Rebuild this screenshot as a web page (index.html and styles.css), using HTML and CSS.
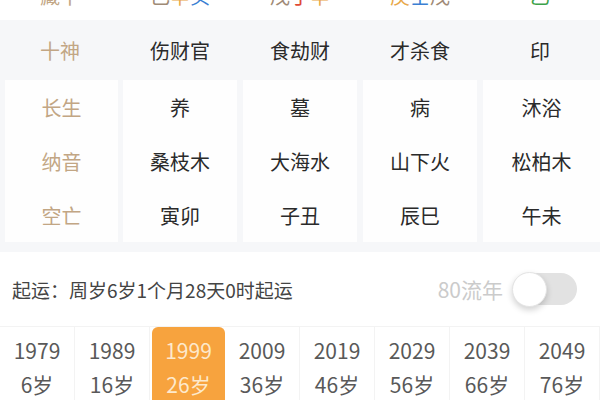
FILE: index.html
```html
<!DOCTYPE html>
<html lang="zh-CN">
<head>
<meta charset="utf-8">
<link rel="stylesheet" href="styles.css">
</head>
<body>
<div class="page">
  <div class="top-row">
    <div class="cell label">藏干</div>
    <div class="cell"><span class="earth">己</span><span class="metal">辛</span><span class="water">癸</span></div>
    <div class="cell"><span class="earth">戊</span><span class="fire">丁</span><span class="metal">辛</span></div>
    <div class="cell"><span class="metal">庚</span><span class="water">壬</span><span class="earth">戊</span></div>
    <div class="cell"><span class="wood">乙</span></div>
  </div>
  <div class="pillars">
    <div class="shishen">
      <div class="cell label">十神</div>
      <div class="cell">伤财官</div>
      <div class="cell">食劫财</div>
      <div class="cell">才杀食</div>
      <div class="cell">印</div>
    </div>
    <div class="cards">
      <div class="card">
        <div class="cell label">长生</div>
        <div class="cell label">纳音</div>
        <div class="cell label">空亡</div>
      </div>
      <div class="card">
        <div class="cell">养</div>
        <div class="cell">桑枝木</div>
        <div class="cell">寅卯</div>
      </div>
      <div class="card">
        <div class="cell">墓</div>
        <div class="cell">大海水</div>
        <div class="cell">子丑</div>
      </div>
      <div class="card">
        <div class="cell">病</div>
        <div class="cell">山下火</div>
        <div class="cell">辰巳</div>
      </div>
      <div class="card">
        <div class="cell">沐浴</div>
        <div class="cell">松柏木</div>
        <div class="cell">午未</div>
      </div>
    </div>
  </div>
  <div class="qiyun">
    <div class="qiyun-text">起运：周岁6岁1个月28天0时起运</div>
    <div class="liunian">
      <span class="liunian-label">80流年</span>
      <span class="switch"><span class="knob"></span></span>
    </div>
  </div>
  <div class="years">
    <div class="year"><div class="y">1979</div><div class="a">6岁</div></div>
    <div class="year"><div class="y">1989</div><div class="a">16岁</div></div>
    <div class="year active"><div class="y">1999</div><div class="a">26岁</div></div>
    <div class="year"><div class="y">2009</div><div class="a">36岁</div></div>
    <div class="year"><div class="y">2019</div><div class="a">46岁</div></div>
    <div class="year"><div class="y">2029</div><div class="a">56岁</div></div>
    <div class="year"><div class="y">2039</div><div class="a">66岁</div></div>
    <div class="year"><div class="y">2049</div><div class="a">76岁</div></div>
  </div>
</div>
</body>
</html>
```

FILE: styles.css
```css
* { box-sizing: border-box; }
html, body {
  margin: 0;
  padding: 0;
  background: #ffffff;
}
body {
  width: 600px;
  height: 400px;
  overflow: hidden;
  font-family: "Noto Sans CJK SC", "Noto Sans", sans-serif;
  color: #2a2a2a;
}
.page {
  display: flex;
  flex-direction: column;
}
.label { color: #c2a684; }

.top-row {
  height: 20px;
  overflow: hidden;
  display: grid;
  grid-template-columns: repeat(5, 1fr);
  background: #ffffff;
}
.top-row .cell {
  font-size: 20px;
  line-height: 20px;
  height: 20px;
  margin-top: -14px;
  text-align: center;
}
.earth { color: #a08a76; }
.metal { color: #e8a84a; }
.water { color: #3b7fd3; }
.fire { color: #e04a36; }
.wood { color: #3ca24a; }

.pillars {
  background: #f6f7f9;
  padding-bottom: 10px;
}
.shishen {
  display: grid;
  grid-template-columns: repeat(5, 1fr);
  height: 60px;
}
.cell {
  display: flex;
  align-items: center;
  justify-content: center;
  font-size: 20px;
}
.shishen .cell { height: 60px; }
.cards {
  display: grid;
  grid-template-columns: repeat(5, 1fr);
}
.card {
  background: #fefefe;
  margin: 0 3px;
  display: flex;
  flex-direction: column;
}
.card:first-child { margin-left: 5px; margin-right: 2px; }
.card:last-child { margin-right: 0; }
.card .cell { height: 54px; }

.qiyun {
  height: 74px;
  display: flex;
  align-items: center;
  justify-content: space-between;
  padding: 0 23px 0 12px;
}
.qiyun-text {
  font-size: 19px;
  color: #444444;
}
.liunian {
  display: flex;
  align-items: center;
  gap: 10px;
}
.liunian-label {
  font-size: 21px;
  color: #cbcbcb;
}
.switch {
  width: 64px;
  height: 32px;
  border-radius: 16px;
  background: #e2e2e2;
  display: flex;
  align-items: center;
}
.knob {
  width: 35px;
  height: 35px;
  border-radius: 50%;
  background: #ffffff;
  border: 1px solid #e4e4e4;
  box-shadow: 0 3px 6px rgba(0, 0, 0, 0.18);
  margin-left: -1px;
}

.years {
  display: grid;
  grid-template-columns: repeat(8, 75px);
  border-top: 1px solid #f3f3f3;
  height: 80px;
}
.year {
  padding-top: 6px;
  text-align: center;
  border-right: 1px solid #f3f3f3;
  color: #595959;
}
.year .y, .year .a {
  font-size: 21px;
  line-height: 34px;
}
.year.active {
  background: #f7a33e;
  color: #fde9cc;
  border-radius: 6px 6px 0 0;
  margin-left: 2px;
  border-right: none;
}
```
